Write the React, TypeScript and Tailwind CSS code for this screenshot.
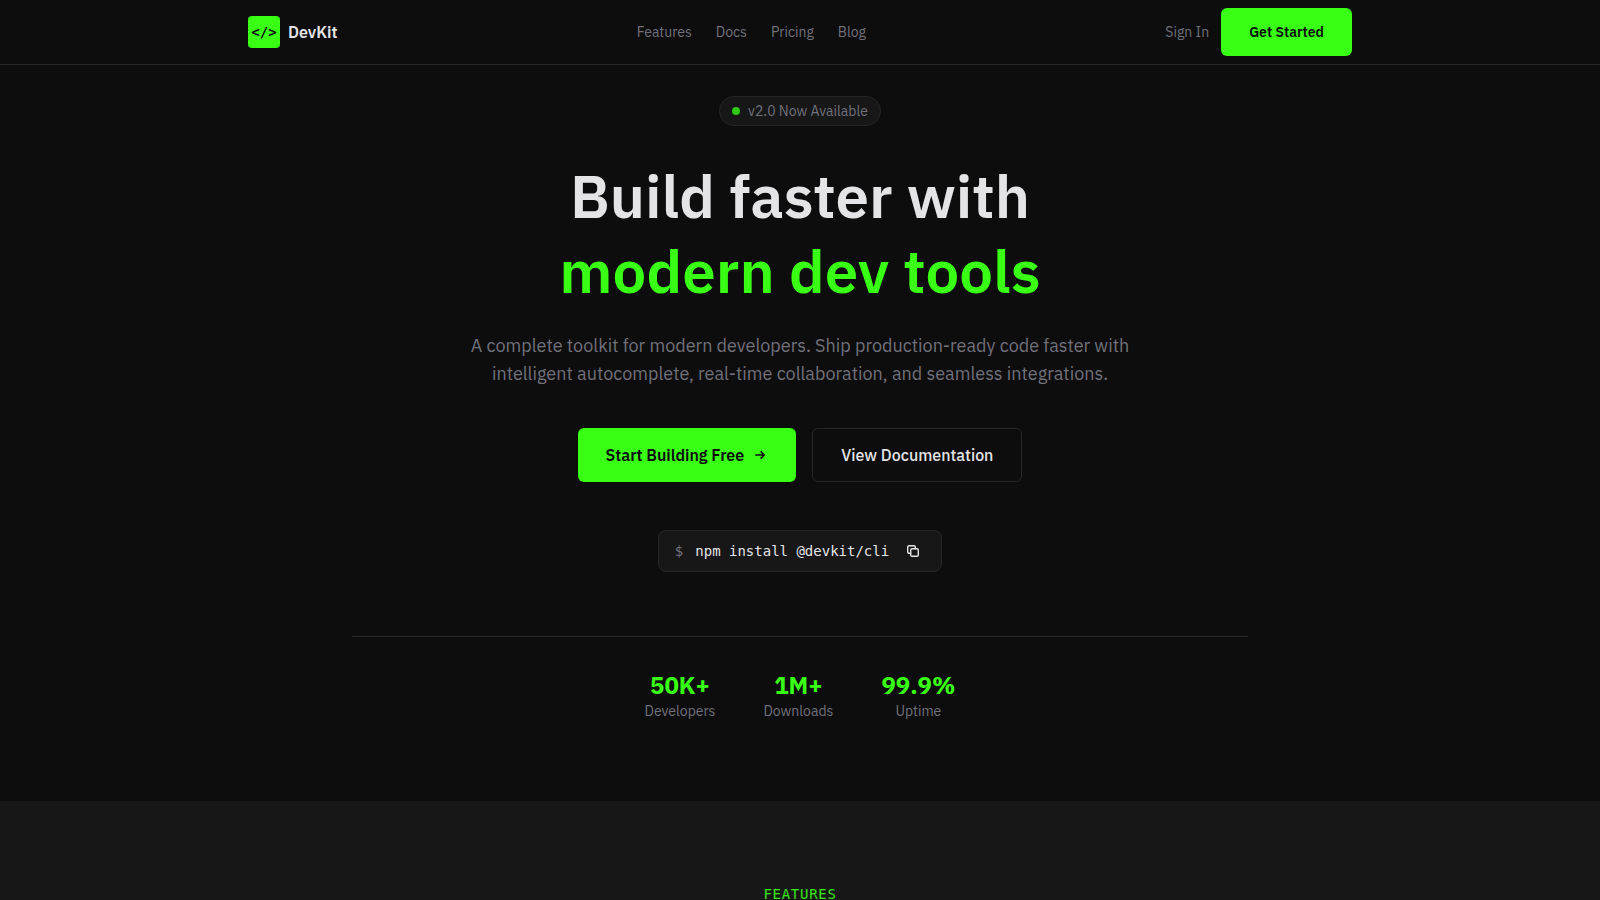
import { useState } from "react";

const NAV_LINKS = ["Features", "Docs", "Pricing", "Blog"];

const STATS = [
  { value: "50K+", label: "Developers" },
  { value: "1M+", label: "Downloads" },
  { value: "99.9%", label: "Uptime" },
];

const INSTALL_CMD = "npm install @devkit/cli";

export default function App() {
  return (
    <div className="min-h-screen bg-[#0d0d0d] font-['IBM_Plex_Sans',Roboto,sans-serif] text-[#e4e4e7] antialiased">
      <Header />
      <main>
        <Hero />
        <Features />
      </main>
    </div>
  );
}

function Header() {
  return (
    <header className="border-b border-[#262626]">
      <div className="mx-auto flex h-16 max-w-6xl items-center justify-between px-6">
        <a href="#" className="flex items-center gap-2">
          <span className="flex size-8 items-center justify-center rounded bg-[#39ff14] font-['DejaVu_Sans_Mono',monospace] text-sm font-bold text-[#0d0d0d]">
            {"</>"}
          </span>
          <span className="font-semibold">DevKit</span>
        </a>
        <nav className="flex items-center gap-6 text-sm text-[#71717a]">
          {NAV_LINKS.map((label) => (
            <a key={label} href={`#${label.toLowerCase()}`} className="hover:text-[#e4e4e7]">
              {label}
            </a>
          ))}
        </nav>
        <div className="flex items-center gap-3 text-sm">
          <a href="#signin" className="text-[#71717a] hover:text-[#e4e4e7]">
            Sign In
          </a>
          <button type="button" className="h-12 rounded-md bg-[#39ff14] px-7 font-semibold text-[#0d0d0d]">
            Get Started
          </button>
        </div>
      </div>
    </header>
  );
}

function Hero() {
  return (
    <section className="mx-auto flex max-w-4xl flex-col items-center pt-[31px] pb-20 text-center">
      <div className="flex items-center gap-2 rounded-full border border-[#262626] bg-[#171717] px-3 py-1 text-sm text-[#71717a]">
        <span className="size-2 rounded-full bg-[#30c914]" />
        v2.0 Now Available
      </div>

      <h1 className="mt-8 text-6xl leading-[75px] font-semibold">
        Build faster with
        <br />
        <span className="text-[#39ff14]">modern dev tools</span>
      </h1>

      <p className="mt-6 max-w-2xl text-lg leading-7 text-[#71717a]">
        A complete toolkit for modern developers. Ship production-ready code faster with intelligent
        autocomplete, real-time collaboration, and seamless integrations.
      </p>

      <div className="mt-10 flex gap-4">
        <button
          type="button"
          className="flex h-[54px] items-center gap-2 rounded-md bg-[#39ff14] px-7 font-semibold text-[#0d0d0d]"
        >
          Start Building Free
          <ArrowIcon />
        </button>
        <button
          type="button"
          className="h-[54px] rounded-md border border-[#262626] px-7 font-medium"
        >
          View Documentation
        </button>
      </div>

      <InstallCommand />

      <dl className="mt-16 flex w-full justify-center gap-12 border-t border-[#262626] pt-8">
        {STATS.map((s) => (
          <div key={s.label} className="flex flex-col-reverse">
            <dt className="text-sm text-[#71717a]">{s.label}</dt>
            <dd className="text-2xl font-bold text-[#39ff14]">{s.value}</dd>
          </div>
        ))}
      </dl>
    </section>
  );
}

function InstallCommand() {
  const [copied, setCopied] = useState(false);
  return (
    <div className="mt-12 flex items-center gap-3 rounded-lg border border-[#262626] bg-[#171717] px-4 py-2 font-['DejaVu_Sans_Mono',monospace] text-sm">
      <span className="text-[#71717a]">$</span>
      <code className="font-['DejaVu_Sans_Mono',monospace]">{INSTALL_CMD}</code>
      <button
        type="button"
        aria-label="Copy install command"
        className={`flex size-6 items-center justify-center ${copied ? "text-[#39ff14]" : ""}`}
        onClick={async () => {
          await navigator.clipboard.writeText(INSTALL_CMD);
          setCopied(true);
          window.setTimeout(() => setCopied(false), 1200);
        }}
      >
        <CopyIcon />
      </button>
    </div>
  );
}

function Features() {
  return (
    <section id="features" className="bg-[#171717] py-20 text-center">
      <h2 className="font-['DejaVu_Sans_Mono',monospace] text-sm leading-[26px] tracking-wider text-[#39ff14]/90">
        FEATURES
      </h2>
    </section>
  );
}

function ArrowIcon() {
  return (
    <svg
      className="size-4"
      viewBox="0 0 16 16"
      fill="none"
      stroke="currentColor"
      strokeWidth="1.6"
      strokeLinecap="round"
      strokeLinejoin="round"
      aria-hidden="true"
    >
      <path d="M3.8 8h8.2M9.1 4.9 12.2 8l-3.1 3.1" />
    </svg>
  );
}

function CopyIcon() {
  return (
    <svg
      className="size-3.5"
      viewBox="0 0 14 14"
      fill="none"
      stroke="currentColor"
      strokeWidth="1.4"
      strokeLinecap="round"
      strokeLinejoin="round"
      aria-hidden="true"
    >
      <rect x="4.7" y="4.7" width="7.6" height="7.6" rx="1.4" />
      <path d="M4.7 9.3H3.1a1.4 1.4 0 0 1-1.4-1.4V3.1a1.4 1.4 0 0 1 1.4-1.4h4.8a1.4 1.4 0 0 1 1.4 1.4v1.6" />
    </svg>
  );
}
